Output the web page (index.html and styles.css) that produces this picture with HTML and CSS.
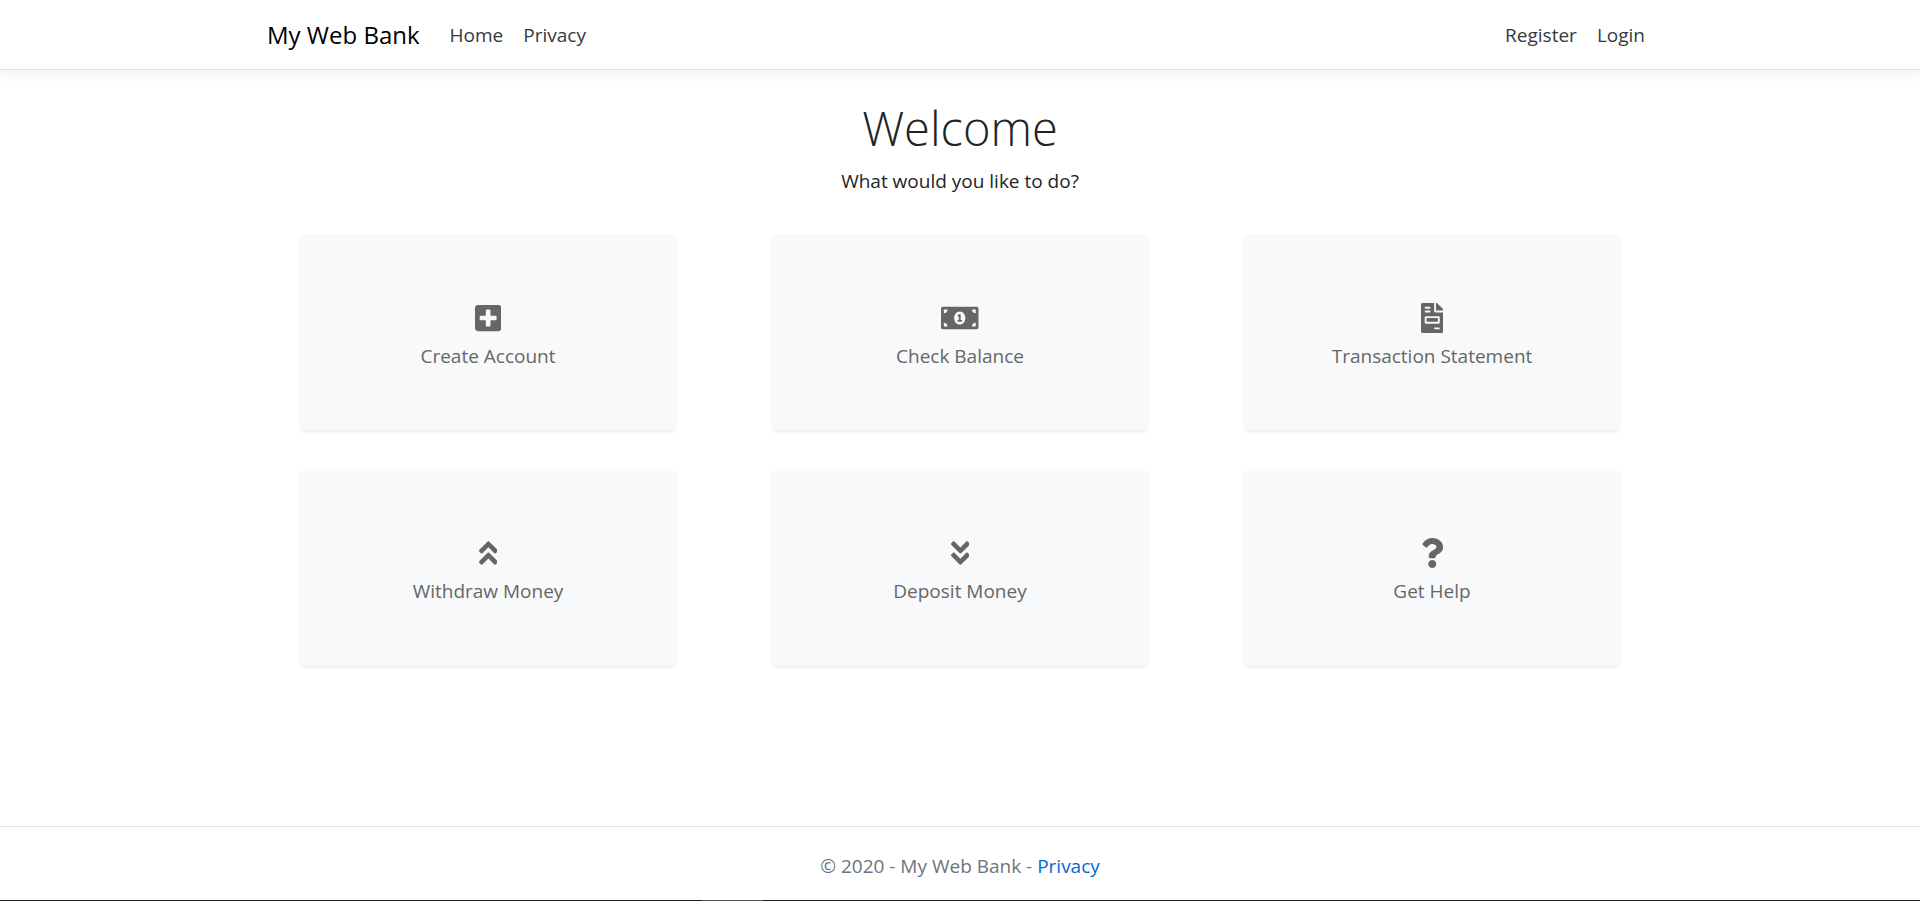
FILE: index.html
```html
<!DOCTYPE html>
<html lang="en">
<head>
<meta charset="utf-8">
<meta name="viewport" content="width=device-width, initial-scale=1">
<title>Home - My Web Bank</title>
<link rel="stylesheet" href="styles.css">
</head>
<body>
<header class="site-header">
  <nav class="container navbar">
    <a class="brand" href="#">My Web Bank</a>
    <ul class="nav nav-main">
      <li><a href="#">Home</a></li>
      <li><a href="#">Privacy</a></li>
    </ul>
    <ul class="nav">
      <li><a href="#">Register</a></li>
      <li><a href="#">Login</a></li>
    </ul>
  </nav>
</header>
<main class="container content">
  <h1 class="title">Welcome</h1>
  <p class="lead">What would you like to do?</p>
  <div class="cards">
    <a class="card" href="#">
      <svg class="icon" viewBox="0 0 448 512" aria-hidden="true"><path d="M400 32H48C21.500 32 0 53.500 0 80v352c0 26.500 21.500 48 48 48h352c26.500 0 48-21.500 48-48V80c0-26.500-21.500-48-48-48zm-32 252c0 6.600-5.400 12-12 12h-92v92c0 6.600-5.400 12-12 12h-56c-6.600 0-12-5.400-12-12v-92H92c-6.600 0-12-5.400-12-12v-56c0-6.600 5.400-12 12-12h92v-92c0-6.600 5.400-12 12-12h56c6.600 0 12 5.400 12 12v92h92c6.600 0 12 5.400 12 12v56z"/></svg>
      <span>Create Account</span>
    </a>
    <a class="card" href="#">
      <svg class="icon" viewBox="0 0 640 512" aria-hidden="true"><path d="M352 288h-16v-88c0-4.420-3.580-8-8-8h-13.580c-4.740 0-9.370 1.400-13.310 4.030l-15.330 10.220a7.994 7.994 0 0 0-2.220 11.090l8.880 13.310a7.994 7.994 0 0 0 11.090 2.220l.47-.31V288h-16c-4.420 0-8 3.580-8 8v16c0 4.420 3.580 8 8 8h64c4.420 0 8-3.580 8-8v-16c0-4.420-3.580-8-8-8zM608 64H32C14.330 64 0 78.330 0 96v320c0 17.670 14.330 32 32 32h576c17.670 0 32-14.330 32-32V96c0-17.670-14.330-32-32-32zM48 400v-64c35.350 0 64 28.650 64 64H48zm0-224v-64h64c0 35.350-28.650 64-64 64zm272 192c-53.020 0-96-50.150-96-112 0-61.860 42.980-112 96-112s96 50.140 96 112c0 61.870-43 112-96 112zm272 32h-64c0-35.350 28.650-64 64-64v64zm0-224c-35.350 0-64-28.650-64-64h64v64z"/></svg>
      <span>Check Balance</span>
    </a>
    <a class="card" href="#">
      <svg class="icon" viewBox="0 0 384 512" aria-hidden="true"><path d="M288 256H96v64h192v-64zm89-151L279.100 7c-4.500-4.500-10.600-7-17-7H256v128h128v-6.100c0-6.300-2.500-12.400-7-16.900zm-153 31V0H24C10.700 0 0 10.700 0 24v464c0 13.300 10.700 24 24 24h336c13.300 0 24-10.700 24-24V160H248c-13.200 0-24-10.800-24-24zM64 72c0-4.420 3.580-8 8-8h80c4.420 0 8 3.580 8 8v16c0 4.420-3.580 8-8 8H72c-4.420 0-8-3.580-8-8V72zm0 64c0-4.420 3.580-8 8-8h80c4.420 0 8 3.580 8 8v16c0 4.420-3.580 8-8 8H72c-4.420 0-8-3.580-8-8v-16zm256 304c0 4.420-3.580 8-8 8h-80c-4.420 0-8-3.580-8-8v-16c0-4.420 3.580-8 8-8h80c4.420 0 8 3.580 8 8v16zm0-200v96c0 8.840-7.160 16-16 16H80c-8.840 0-16-7.160-16-16v-96c0-8.840 7.160-16 16-16h224c8.840 0 16 7.160 16 16z"/></svg>
      <span>Transaction Statement</span>
    </a>
    <a class="card" href="#">
      <svg class="icon" viewBox="0 0 320 512" aria-hidden="true"><path d="M177 255.700l136 136c9.400 9.400 9.400 24.600 0 33.900l-22.600 22.600c-9.400 9.400-24.600 9.400-33.900 0L160 351.900l-96.400 96.400c-9.400 9.400-24.600 9.400-33.900 0L7 425.700c-9.400-9.400-9.400-24.600 0-33.900l136-136c9.400-9.500 24.600-9.500 34-.1zm-34-192L7 199.700c-9.400 9.400-9.400 24.600 0 33.900l22.600 22.600c9.400 9.400 24.600 9.400 33.900 0l96.400-96.400 96.400 96.400c9.400 9.400 24.600 9.400 33.900 0l22.600-22.600c9.400-9.400 9.400-24.600 0-33.900l-136-136c-9.200-9.400-24.400-9.400-33.800 0z"/></svg>
      <span>Withdraw Money</span>
    </a>
    <a class="card" href="#">
      <svg class="icon" viewBox="0 0 320 512" aria-hidden="true"><path transform="rotate(180 160 256)" d="M177 255.700l136 136c9.400 9.400 9.400 24.600 0 33.900l-22.600 22.600c-9.400 9.400-24.600 9.400-33.900 0L160 351.900l-96.400 96.400c-9.400 9.400-24.600 9.400-33.900 0L7 425.700c-9.400-9.400-9.400-24.600 0-33.900l136-136c9.400-9.500 24.600-9.500 34-.1zm-34-192L7 199.700c-9.400 9.400-9.400 24.600 0 33.900l22.600 22.600c9.400 9.400 24.600 9.400 33.900 0l96.400-96.400 96.400 96.400c9.400 9.400 24.600 9.400 33.900 0l22.600-22.600c9.400-9.400 9.400-24.600 0-33.900l-136-136c-9.200-9.400-24.400-9.400-33.800 0z"/></svg>
      <span>Deposit Money</span>
    </a>
    <a class="card" href="#">
      <svg class="icon" viewBox="0 0 384 512" aria-hidden="true"><path d="M202.021 0C122.202 0 70.503 32.703 29.914 91.026c-7.363 10.580-5.093 25.086 5.178 32.874l43.138 32.709c10.373 7.865 25.132 6.026 33.253-4.148 25.049-31.381 43.630-49.449 82.757-49.449 30.764 0 68.816 19.799 68.816 49.631 0 22.552-18.617 34.134-48.993 51.164-35.423 19.860-82.299 44.576-82.299 106.405V320c0 13.255 10.745 24 24 24h72.471c13.255 0 24-10.745 24-24v-5.773c0-42.860 125.268-44.645 125.268-160.627C377.504 66.256 286.902 0 202.021 0zM192 373.459c-38.196 0-69.271 31.075-69.271 69.271 0 38.195 31.075 69.270 69.271 69.270s69.271-31.075 69.271-69.271-31.075-69.270-69.271-69.270z"/></svg>
      <span>Get Help</span>
    </a>
  </div>
</main>
<footer class="site-footer">
  <p>© 2020 - My Web Bank - <a href="#">Privacy</a></p>
</footer>
<div class="edge"></div>
</body>
</html>
```
FILE: styles.css
```css
* { box-sizing: border-box; }

body {
  display: flex;
  flex-direction: column;
  min-height: 100vh;
  margin: 0;
  background: #fff;
  color: #212529;
  font-family: "Open Sans", "Noto Sans", sans-serif;
  font-size: 19px;
  line-height: 30px;
}

a { color: inherit; text-decoration: none; }

.container {
  width: 100%;
  max-width: 1424px;
  margin: 0 auto;
  padding: 0 19px;
}

.site-header {
  border-bottom: 1px solid #dee2e6;
  box-shadow: 0 5px 15px rgba(0, 0, 0, 0.05);
}

.navbar {
  display: flex;
  align-items: center;
  padding-top: 15px;
  padding-bottom: 14px;
}

.brand {
  margin-right: 30px;
  color: #000;
  font-size: 24px;
  line-height: 40px;
}

.nav {
  display: flex;
  gap: 20px;
  margin: 0;
  padding: 0 8px 0 0;
  list-style: none;
  color: #343a40;
}

.nav-main { flex: 1; }

.content { flex: 1; text-align: center; }

.title {
  margin: 28px 0 8px;
  font-size: 47px;
  font-weight: 300;
  line-height: 60px;
}

.lead { margin: 0 0 39px; }

.cards {
  display: grid;
  grid-template-columns: repeat(3, 1fr);
  gap: 40px 98px;
  padding: 0 34px;
}

.card {
  display: flex;
  flex-direction: column;
  align-items: center;
  gap: 8px;
  padding: 68px 20px 59px;
  border-radius: 2px;
  background: #f8f9fa;
  box-shadow: 0 2px 5px rgba(0, 0, 0, 0.08);
  color: #666;
}

.icon { height: 30px; fill: currentColor; }

.site-footer {
  padding: 24px 20px 20px;
  border-top: 1px solid #dee2e6;
  color: #6c757d;
  text-align: center;
}

.site-footer p { margin: 0; }
.site-footer a { color: #0366d6; }

.edge {
  position: fixed;
  inset: auto 0 0;
  height: 1px;
  background: linear-gradient(90deg, #1c1c1c 702px, #555 702px 763px, #1c1c1c 763px);
}
```
